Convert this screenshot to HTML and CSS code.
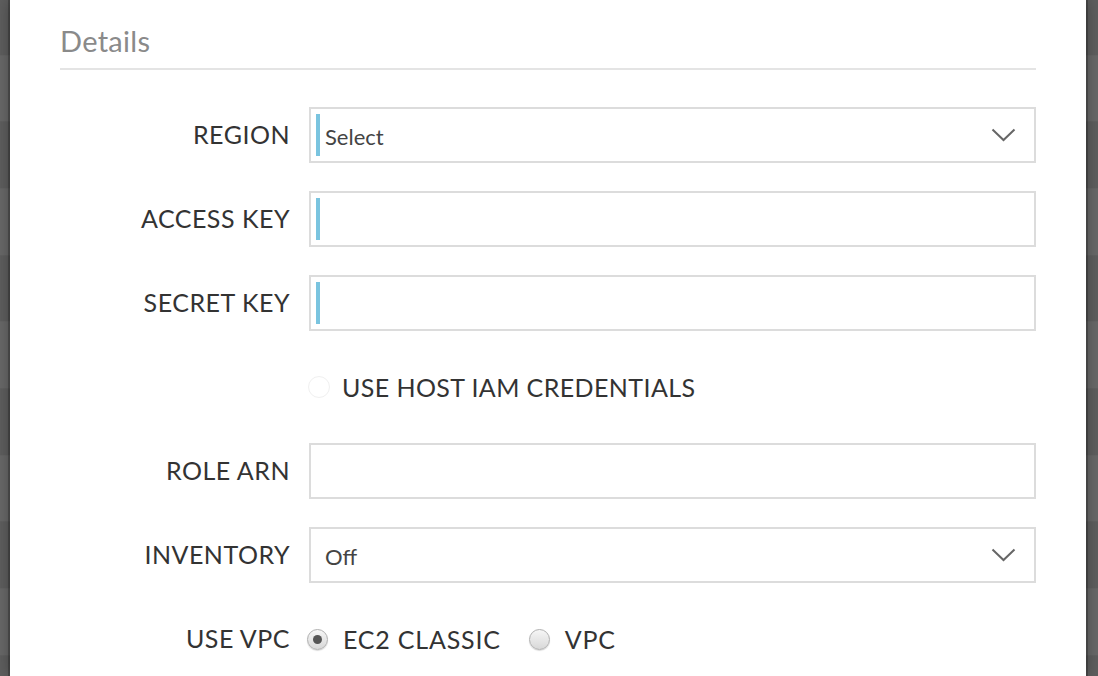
FILE: index.html
```html
<!DOCTYPE html>
<html>
<head>
<meta charset="utf-8">
<link rel="stylesheet" href="styles.css">
</head>
<body>
<div class="modal">
  <h2 class="heading">Details</h2>
  <form class="form">
    <label class="label">REGION</label>
    <div class="field select"><span class="value req">Select</span><svg class="chev" width="25" height="14" viewBox="0 0 25 14"><polyline points="1.5,1.5 12.5,12 23.5,1.5" fill="none" stroke="#666" stroke-width="2"/></svg></div>

    <label class="label">ACCESS KEY</label>
    <div class="field"><span class="value req"></span></div>

    <label class="label">SECRET KEY</label>
    <div class="field"><span class="value req"></span></div>

    <span class="label"></span>
    <div class="check"><span class="box"></span><span class="text">USE HOST IAM CREDENTIALS</span></div>

    <label class="label">ROLE ARN</label>
    <div class="field"><span class="value"></span></div>

    <label class="label">INVENTORY</label>
    <div class="field select"><span class="value">Off</span><svg class="chev" width="25" height="14" viewBox="0 0 25 14"><polyline points="1.5,1.5 12.5,12 23.5,1.5" fill="none" stroke="#666" stroke-width="2"/></svg></div>

    <label class="label">USE VPC</label>
    <div class="radios">
      <span class="radio checked"></span><span class="text">EC2 CLASSIC</span>
      <span class="radio second"></span><span class="text">VPC</span>
    </div>
  </form>
</div>
</body>
</html>
```
FILE: styles.css
```css
html, body {
  margin: 0;
  padding: 0;
  height: 100%;
  overflow: hidden;
}
body {
  background-color: #636363;
  background-image: repeating-linear-gradient(180deg, #5e5e5e 0, #5e5e5e 66.67px, #686868 66.67px, #686868 133.33px);
  background-position: 0 -11.67px;
  font-family: Lato, "Liberation Sans", sans-serif;
}
.modal {
  position: absolute;
  top: 0;
  left: 10px;
  width: 1076px;
  height: 100%;
  background: #fff;
  box-sizing: border-box;
  padding: 24px 50px 0 50px;
  box-shadow: 0 0 0 2px rgba(0,0,0,0.22), 0 0 14px rgba(0,0,0,0.35);
}
.heading {
  margin: 0;
  font-weight: 400;
  font-size: 29px;
  letter-spacing: 0.3px;
  line-height: 34px;
  color: #8a8a8a;
  padding-bottom: 10px;
  border-bottom: 2px solid #e4e4e4;
}
.form {
  margin-top: 37px;
  display: grid;
  grid-template-columns: 230px 1fr;
  grid-auto-rows: 56px;
  column-gap: 19px;
  row-gap: 28px;
  align-items: center;
}
.label {
  text-align: right;
  font-size: 25px;
  color: #333;
  letter-spacing: 0.5px;
  margin-bottom: 3px;
}
.field {
  height: 56px;
  box-sizing: border-box;
  border: 2px solid #dcdcdc;
  padding: 5px 18px 5px 5px;
  display: flex;
  align-items: center;
}
.value {
  flex: 1;
  height: 42px;
  display: flex;
  align-items: center;
  border-left: 4px solid transparent;
  padding-left: 5px;
  font-size: 22px;
  color: #444;
  padding-top: 2px;
  box-sizing: border-box;
}
.value.req {
  border-left-color: #7ac4df;
}
.chev {
  display: block;
}
.check, .radios {
  display: flex;
  align-items: center;
  font-size: 25px;
  letter-spacing: 0.4px;
  color: #333;
}
.radios {
  letter-spacing: 0.8px;
}
.box {
  width: 22px;
  height: 22px;
  box-sizing: border-box;
  border: 1px solid #f0f0f0;
  border-radius: 50%;
  margin-left: -1px;
  margin-right: 12px;
}
.radio {
  width: 21px;
  height: 21px;
  box-sizing: border-box;
  border-radius: 50%;
  border: 1px solid #b0b0b0;
  background: linear-gradient(#f6f6f6, #d8d8d8);
  box-shadow: 0 1px 1px rgba(0,0,0,0.15);
  margin-left: -2px;
  margin-right: 15px;
  position: relative;
}
.radio.checked::after {
  content: "";
  position: absolute;
  left: 5px;
  top: 5px;
  width: 9px;
  height: 9px;
  border-radius: 50%;
  background: #555;
}
.radio.second {
  margin-left: 28px;
  margin-right: 15px;
}
```
